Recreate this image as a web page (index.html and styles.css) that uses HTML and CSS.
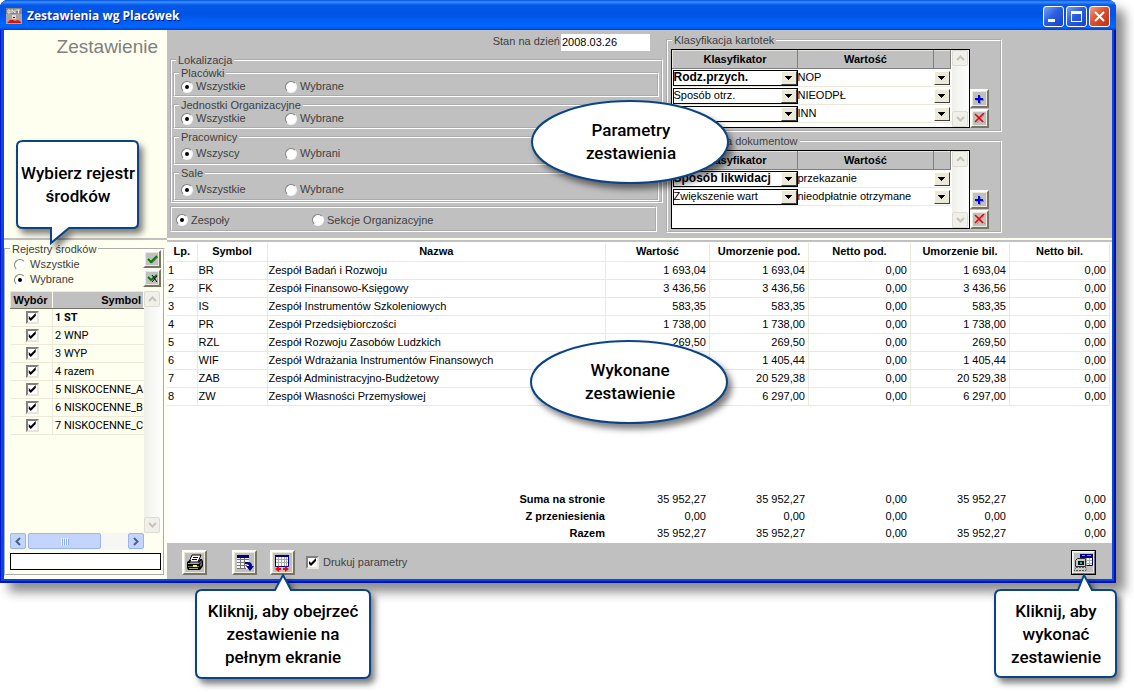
FILE: index.html
```html
<!DOCTYPE html>
<html lang="pl">
<head>
<meta charset="utf-8">
<title>Zestawienia wg Placówek</title>
<link rel="stylesheet" href="styles.css">
</head>
<body>
<svg class="defs" width="0" height="0" aria-hidden="true">
  <symbol id="chev-up" viewBox="0 0 9 6"><path d="M1 5 4.500 1.500 8 5" fill="none" stroke="currentColor" stroke-width="2"/></symbol>
  <symbol id="chev-down" viewBox="0 0 9 6"><path d="M1 1 4.500 4.500 8 1" fill="none" stroke="currentColor" stroke-width="2"/></symbol>
  <symbol id="chev-left" viewBox="0 0 6 9"><path d="M5 1 1.500 4.500 5 8" fill="none" stroke="currentColor" stroke-width="2"/></symbol>
  <symbol id="chev-right" viewBox="0 0 6 9"><path d="M1 1 4.500 4.500 1 8" fill="none" stroke="currentColor" stroke-width="2"/></symbol>
  <symbol id="drop" viewBox="0 0 7 4"><path d="M0 0h7v1h-1v1h-1v1h-1v1h-1v-1h-1v-1h-1v-1h-1z" fill="#000"/></symbol>
  <symbol id="plus" viewBox="0 0 11 11"><path d="M5 3h2v3h3v2h-3v3h-2v-3h-3v-2h3z" fill="#888"/><path d="M4 2h2v3h3v2h-3v3h-2v-3h-3v-2h3z" fill="#00f"/></symbol>
  <symbol id="cross" viewBox="0 0 11 11"><path d="M3 2 11 10M10 2 3 10" stroke="#999" stroke-width="1"/><path d="M1 1 4 4 9 9M10 0 5 5 1 9" stroke="#f00000" stroke-width="1.600" fill="none"/></symbol>
</svg>

<div class="stage">
<main class="window">
  <header class="titlebar">
    <svg class="app-icon" width="16" height="16" viewBox="0 0 16 16"><rect width="16" height="16" fill="#a9a3a3"/><path d="M0 0h16v6h-16z" fill="#8e8484"/><path d="M2 2h2v3h-2zM6 5v-3.500l3 3.500v-3.500M10 2h4M12.500 2v3.500" fill="none" stroke="#eee"/><path d="M6 7h4v4h-4z" fill="#ead8d0"/><path d="M7 9h2v1h-2z" fill="#222"/><path d="M1 15l3-3h3l2 1 3-1 3 2v1z" fill="#e01000"/></svg>
    <h1 class="title">Zestawienia wg Placówek</h1>
    <div class="winbtns">
      <button class="winbtn" aria-label="Minimalizuj"><svg width="19" height="19" viewBox="0 0 19 19"><path d="M4 12h7v3h-7z" fill="#fff"/></svg></button>
      <button class="winbtn" aria-label="Maksymalizuj"><svg width="19" height="19" viewBox="0 0 19 19"><path d="M4 4h11v11h-11zM5 7v7h9v-7z" fill="#fff" fill-rule="evenodd"/></svg></button>
      <button class="winbtn close" aria-label="Zamknij"><svg width="19" height="19" viewBox="0 0 19 19"><path d="M5 5 14 14M14 5 5 14" stroke="#fff" stroke-width="2"/></svg></button>
    </div>
  </header>

  <div class="client">
    <div class="side-top"><h2 class="heading">Zestawienie</h2></div>

    <section class="params">
      <div class="location">
        <div class="date-row"><label for="day">Stan na dzień</label><input id="day" class="date" type="text" value="2008.03.26"></div>
        <fieldset class="group outer">
          <legend>Lokalizacja</legend>
          <fieldset class="group inner short">
            <legend>Placówki</legend>
            <label class="opt"><input type="radio" name="pl" checked>Wszystkie</label><label class="opt"><input type="radio" name="pl">Wybrane</label>
          </fieldset>
          <fieldset class="group inner short">
            <legend>Jednostki Organizacyjne</legend>
            <label class="opt"><input type="radio" name="jo" checked>Wszystkie</label><label class="opt"><input type="radio" name="jo">Wybrane</label>
          </fieldset>
          <fieldset class="group inner tall">
            <legend>Pracownicy</legend>
            <label class="opt"><input type="radio" name="pr" checked>Wszyscy</label><label class="opt"><input type="radio" name="pr">Wybrani</label>
          </fieldset>
          <fieldset class="group inner tall">
            <legend>Sale</legend>
            <label class="opt"><input type="radio" name="sa" checked>Wszystkie</label><label class="opt"><input type="radio" name="sa">Wybrane</label>
          </fieldset>
        </fieldset>
        <div class="group units">
          <label class="opt unit"><input type="radio" name="zs" checked>Zespoły</label><label class="opt"><input type="radio" name="zs">Sekcje Organizacyjne</label>
        </div>
      </div>

      <div class="classes">
        <fieldset class="group class-set">
          <legend>Klasyfikacja kartotek</legend>
          <div class="class-body">
            <div class="class-box">
              <table class="class-table">
                <colgroup><col class="k1"><col><col class="k3"></colgroup>
                <thead><tr><th>Klasyfikator</th><th>Wartość</th><th></th></tr></thead>
                <tbody>
                  <tr><td><span class="combo framed"><select class="strong" aria-label="Klasyfikator 1"><option>Rodz.przych.</option></select><i><svg width="7" height="4"><use href="#drop"/></svg></i></span></td><td colspan="2"><span class="combo"><select aria-label="Wartość 1"><option>NOP</option></select><i><svg width="7" height="4"><use href="#drop"/></svg></i></span></td></tr>
                  <tr><td><span class="combo framed"><select aria-label="Klasyfikator 2"><option>Sposób otrz.</option></select><i><svg width="7" height="4"><use href="#drop"/></svg></i></span></td><td colspan="2"><span class="combo"><select aria-label="Wartość 2"><option>NIEODPŁ</option></select><i><svg width="7" height="4"><use href="#drop"/></svg></i></span></td></tr>
                  <tr><td><span class="combo framed"><select aria-label="Klasyfikator 3"><option></option></select><i><svg width="7" height="4"><use href="#drop"/></svg></i></span></td><td colspan="2"><span class="combo"><select aria-label="Wartość 3"><option>INN</option></select><i><svg width="7" height="4"><use href="#drop"/></svg></i></span></td></tr>
                </tbody>
              </table>
              <div class="vscroll"><span class="sb off"><svg width="9" height="6"><use href="#chev-up"/></svg></span><span class="sb off"><svg width="9" height="6"><use href="#chev-down"/></svg></span></div>
            </div>
            <div class="class-btns">
              <button class="bevel small" aria-label="Dodaj"><svg width="11" height="11"><use href="#plus"/></svg></button>
              <button class="bevel small" aria-label="Usuń"><svg width="11" height="11"><use href="#cross"/></svg></button>
            </div>
          </div>
        </fieldset>
        <fieldset class="group class-set">
          <legend>Klasyfikacja dokumentow</legend>
          <div class="class-body">
            <div class="class-box">
              <table class="class-table">
                <colgroup><col class="k1"><col><col class="k3"></colgroup>
                <thead><tr><th>Klasyfikator</th><th>Wartość</th><th></th></tr></thead>
                <tbody>
                  <tr><td><span class="combo framed"><select class="strong" aria-label="Klasyfikator 1"><option>Sposób likwidacj</option></select><i><svg width="7" height="4"><use href="#drop"/></svg></i></span></td><td colspan="2"><span class="combo"><select aria-label="Wartość 1"><option>przekazanie</option></select><i><svg width="7" height="4"><use href="#drop"/></svg></i></span></td></tr>
                  <tr><td><span class="combo framed"><select aria-label="Klasyfikator 2"><option>Zwiększenie wart</option></select><i><svg width="7" height="4"><use href="#drop"/></svg></i></span></td><td colspan="2"><span class="combo"><select aria-label="Wartość 2"><option>nieodpłatnie otrzymane</option></select><i><svg width="7" height="4"><use href="#drop"/></svg></i></span></td></tr>
                </tbody>
              </table>
              <div class="vscroll"><span class="sb off"><svg width="9" height="6"><use href="#chev-up"/></svg></span><span class="sb off"><svg width="9" height="6"><use href="#chev-down"/></svg></span></div>
            </div>
            <div class="class-btns">
              <button class="bevel small" aria-label="Dodaj"><svg width="11" height="11"><use href="#plus"/></svg></button>
              <button class="bevel small" aria-label="Usuń"><svg width="11" height="11"><use href="#cross"/></svg></button>
            </div>
          </div>
        </fieldset>
      </div>
    </section>

    <aside class="side">
      <fieldset class="group registers">
        <legend>Rejestry środków</legend>
        <div class="reg-head">
          <div class="reg-opts">
            <label class="opt"><input type="radio" name="rj">Wszystkie</label>
            <label class="opt"><input type="radio" name="rj" checked>Wybrane</label>
          </div>
          <div class="reg-btns">
            <button class="bevel reg" aria-label="Zaznacz wszystkie"><svg width="11" height="9" viewBox="0 0 11 9"><path d="M2 5 5 8 11 2" stroke="#777" fill="none"/><path d="M1 4 4 7 10 1" stroke="#008000" stroke-width="2" fill="none"/></svg></button>
            <button class="bevel reg" aria-label="Odznacz wszystkie"><svg width="11" height="9" viewBox="0 0 11 9"><path d="M1 3 4 6 10 1" stroke="#008000" stroke-width="2" fill="none"/><path d="M5 1 10 8M10 2 5 8" stroke="#000" fill="none"/></svg></button>
          </div>
        </div>
        <div class="reg-list">
          <table class="reg-table">
            <colgroup><col class="r1"><col></colgroup>
            <thead><tr><th>Wybór</th><th class="sym">Symbol</th></tr></thead>
            <tbody>
              <tr><td><input type="checkbox" checked id="r1"></td><td><label for="r1"><b>1 ST</b></label></td></tr>
              <tr><td><input type="checkbox" checked id="r2"></td><td><label for="r2">2 WNP</label></td></tr>
              <tr><td><input type="checkbox" checked id="r3"></td><td><label for="r3">3 WYP</label></td></tr>
              <tr><td><input type="checkbox" checked id="r4"></td><td><label for="r4">4 razem</label></td></tr>
              <tr><td><input type="checkbox" checked id="r5"></td><td><label for="r5">5 NISKOCENNE_A</label></td></tr>
              <tr><td><input type="checkbox" checked id="r6"></td><td><label for="r6">6 NISKOCENNE_B</label></td></tr>
              <tr><td><input type="checkbox" checked id="r7"></td><td><label for="r7">7 NISKOCENNE_C</label></td></tr>
            </tbody>
          </table>
          <div class="vscroll"><span class="sb off"><svg width="9" height="6"><use href="#chev-up"/></svg></span><span class="sb off"><svg width="9" height="6"><use href="#chev-down"/></svg></span></div>
        </div>
        <div class="hscroll"><span class="sb"><svg width="6" height="9"><use href="#chev-left"/></svg></span><span class="thumb"><svg width="8" height="7" viewBox="0 0 8 7"><path d="M0 0h1v7h-1zM2 0h1v7h-1zM4 0h1v7h-1zM6 0h1v7h-1z" fill="#eef4fe"/><path d="M1 1h1v6h-1zM3 1h1v6h-1zM5 1h1v6h-1zM7 1h1v6h-1z" fill="#8cb0f8"/></svg></span><span class="sb end"><svg width="6" height="9"><use href="#chev-right"/></svg></span></div>
        <input class="search" type="text" aria-label="Szukaj">
      </fieldset>
    </aside>

    <section class="report">
      <table class="data">
        <colgroup><col class="c1"><col class="c2"><col><col class="c4"><col class="c5"><col class="c6"><col class="c5"><col class="c8"></colgroup>
        <thead><tr><th>Lp.</th><th>Symbol</th><th>Nazwa</th><th>Wartość</th><th>Umorzenie pod.</th><th>Netto pod.</th><th>Umorzenie bil.</th><th>Netto bil.</th></tr></thead>
        <tbody>
          <tr><td>1</td><td>BR</td><td>Zespół Badań i Rozwoju</td><td>1 693,04</td><td>1 693,04</td><td>0,00</td><td>1 693,04</td><td>0,00</td></tr>
          <tr><td>2</td><td>FK</td><td>Zespół Finansowo-Księgowy</td><td>3 436,56</td><td>3 436,56</td><td>0,00</td><td>3 436,56</td><td>0,00</td></tr>
          <tr><td>3</td><td>IS</td><td>Zespół Instrumentów Szkoleniowych</td><td>583,35</td><td>583,35</td><td>0,00</td><td>583,35</td><td>0,00</td></tr>
          <tr><td>4</td><td>PR</td><td>Zespół Przedsiębiorczości</td><td>1 738,00</td><td>1 738,00</td><td>0,00</td><td>1 738,00</td><td>0,00</td></tr>
          <tr><td>5</td><td>RZL</td><td>Zespół Rozwoju Zasobów Ludzkich</td><td>269,50</td><td>269,50</td><td>0,00</td><td>269,50</td><td>0,00</td></tr>
          <tr><td>6</td><td>WIF</td><td>Zespół Wdrażania Instrumentów Finansowych</td><td></td><td>1 405,44</td><td>0,00</td><td>1 405,44</td><td>0,00</td></tr>
          <tr><td>7</td><td>ZAB</td><td>Zespół Administracyjno-Budżetowy</td><td></td><td>20 529,38</td><td>0,00</td><td>20 529,38</td><td>0,00</td></tr>
          <tr><td>8</td><td>ZW</td><td>Zespół Własności Przemysłowej</td><td></td><td>6 297,00</td><td>0,00</td><td>6 297,00</td><td>0,00</td></tr>
        </tbody>
      </table>
      <table class="totals">
        <colgroup><col><col class="c4"><col class="c5"><col class="c6"><col class="c5"><col class="c8"></colgroup>
        <tbody>
          <tr><th scope="row">Suma na stronie</th><td>35 952,27</td><td>35 952,27</td><td>0,00</td><td>35 952,27</td><td>0,00</td></tr>
          <tr><th scope="row">Z przeniesienia</th><td>0,00</td><td>0,00</td><td>0,00</td><td>0,00</td><td>0,00</td></tr>
          <tr><th scope="row">Razem</th><td>35 952,27</td><td>35 952,27</td><td>0,00</td><td>35 952,27</td><td>0,00</td></tr>
        </tbody>
      </table>
      <footer class="toolbar">
        <button class="bevel tool print" aria-label="Drukuj"><svg width="18" height="17" viewBox="0 0 18 17"><path d="M6 1h9l-3 7h-9z" fill="#fff" stroke="#000"/><path d="M7 3.500h5M6 5.500h5" stroke="#000"/><path d="M1 8 4 6h1l-1 3h8l2-4h2l1 2v5l-3 4h-12l-1-2z" fill="#000"/><path d="M2 9.500h11l3-3" stroke="#a8a8a8" fill="none"/><path d="M2 12h11v1h-11z" fill="#808000"/><path d="M7 11h4v2h-4z" fill="#ff0"/><path d="M3 14.500h9" stroke="#a0a0a0"/><path d="M14 10v3l2-2v-3z" fill="#666"/></svg></button>
        <button class="bevel tool export" aria-label="Eksportuj"><svg width="18" height="18" viewBox="0 0 18 18"><path d="M1 4h12v11h-12z" fill="#f4f4f4"/><path d="M1 1h12v3h-12z" fill="#00008b"/><path d="M1 5.500h12M1 8.500h10M1 11.500h10M1 14.500h9M4.500 4v11M8.500 4v11" stroke="#777" shape-rendering="crispEdges"/><path d="M9 8h3q4 0 4 4h2l-4 5-4-5h3q0-2-4-2z" fill="#00008b"/></svg></button>
        <button class="bevel tool" aria-label="Pełny ekran"><svg width="17" height="18" viewBox="0 0 17 18"><path d="M1 1h14v11h-14z" fill="#fff"/><path d="M2 5.500h12M2 8.500h12M4.500 3v9M7.500 3v9M10.500 3v9M12.500 3v9" stroke="#aaa" shape-rendering="crispEdges"/><path d="M1.500 1.500h13v11h-13z" fill="none" stroke="#00008b"/><path d="M1 1h14v2h-14z" fill="#00008b"/><path d="M1 15l4-3v2h2v2h-2v2zM15 15l-4-3v2h-2v2h2v2z" fill="#f00"/></svg></button>
        <label class="print-params"><input type="checkbox" checked>Drukuj parametry</label>
        <button class="bevel tool run" aria-label="Wykonaj zestawienie"><svg width="20" height="19" viewBox="0 0 20 19"><path d="M7 1h12v12h-12z" fill="#fff"/><path d="M6 1h13v4h-13z" fill="#00008b"/><path d="M8 2.500h3M13 2.500h4" stroke="#8890d0"/><path d="M10 7.500h9M10 10.500h9M15.500 5v8M12.500 5v8" stroke="#aaa"/><path d="M18.500 5v7.500h-6" stroke="#00008b" fill="none"/><path d="M1.500 7.500 3.500 5.500h8v8h-10z" fill="#c8c8c8" stroke="#333"/><path d="M4 8h6v4h-6z" fill="#111"/><path d="M6 9h2v2h-2z" fill="#00c8b0"/><path d="M2 14.500h10v3h-12z" fill="#ccc" stroke="#555" stroke-dasharray="2 1"/></svg></button>
      </footer>
    </section>
  </div>
</main>

<div class="callout pick"><svg class="shape" width="124" height="106" viewBox="0 0 124 106"><path d="M7 1H117Q122 1 122 6V83Q122 88 117 88H53L35 103V88H7Q1 88 1 83V6Q1 1 7 1Z"/></svg><p>Wybierz rejestr<br>środków</p></div>
<div class="callout oval params-note"><svg class="shape" width="200" height="84" viewBox="0 0 200 84"><ellipse cx="99" cy="42" rx="98" ry="41"/></svg><p>Parametry<br>zestawienia</p></div>
<div class="callout oval result-note"><svg class="shape" width="200" height="84" viewBox="0 0 200 84"><ellipse cx="99" cy="42" rx="98" ry="41"/></svg><p>Wykonane<br>zestawienie</p></div>
<div class="callout full"><svg class="shape" width="176" height="106" viewBox="0 0 176 106"><path d="M7 16H80L88 1L96 16H169Q175 16 175 22V98Q175 104 169 104H7Q1 104 1 98V22Q1 16 7 16Z"/></svg><p>Kliknij, aby obejrzeć<br>zestawienie na<br>pełnym ekranie</p></div>
<div class="callout exec"><svg class="shape" width="124" height="106" viewBox="0 0 124 106"><path d="M7 16H84L90 1L98 16H116Q122 16 122 22V97Q122 103 116 103H7Q1 103 1 97V22Q1 16 7 16Z"/></svg><p>Kliknij, aby<br>wykonać<br>zestawienie</p></div>
</div>
</body>
</html>
```
FILE: styles.css
```css
* { box-sizing: border-box; }

body {
  margin: 0;
  background: #fff;
  color: #000;
  font: 11px/13px "Liberation Sans", Arial, sans-serif;
}

.defs { position: absolute; }
svg { display: block; overflow: visible; }
button, input, select { font: inherit; color: inherit; margin: 0; padding: 0; border-radius: 0; }

.stage { position: relative; padding: 0 18px 109px 0; }

/* Window frame */
.window {
  display: flex;
  flex-direction: column;
  min-height: calc(100vh - 109px);
  padding: 0 4px 4px;
  border-radius: 8px 8px 0 0;
  background: #0a46e4;
  box-shadow: inset 1px 0 #0019cf, inset -2px -2px #0014a8, 9px 9px 11px rgba(0, 0, 0, .45);
}
.titlebar {
  display: flex;
  align-items: center;
  height: 30px;
  margin: 0 -4px;
  padding: 2px 6px 0;
  border-radius: 8px 8px 0 0;
  background: linear-gradient(#0050d8 0, #3a90ff 2px, #0458e8 5px, #0054e3 14px, #0060fa 22px, #0066ff 27px, #0040c8 30px);
}
.title {
  flex: 1;
  margin: 0 0 0 5px;
  color: #fff;
  font: bold 12px/18px "Open Sans", "Noto Sans", sans-serif;
  text-shadow: 1px 1px #0a1883;
}
.winbtns { display: flex; gap: 2px; }
.winbtn {
  width: 21px;
  height: 21px;
  border: 1px solid #fff;
  border-radius: 3px;
  background: linear-gradient(135deg, #7ba2f0, #2b5fe0 45%, #1941c8);
}
.winbtn.close { background: linear-gradient(135deg, #f0a084, #e0502c 45%, #c03010); }

.client {
  flex: 1;
  display: grid;
  grid-template-columns: 163px minmax(0, 1fr);
  grid-template-rows: auto 1fr;
  background: #fffff0;
}
.side-top { border-bottom: 2px solid #c0c0c0; }
.heading {
  margin: 6px 9px 0 0;
  color: #808080;
  font: 19px/22px "Liberation Sans", Arial, sans-serif;
  text-align: right;
}

/* Grouping boxes */
.group { min-width: 0; margin: 0; padding: 0; border: 2px groove #fff; color: #404040; }
.group legend { margin-left: 3px; padding: 0 2px; line-height: 12px; }
.opt { display: flex; align-items: center; gap: 3px; }
input[type="radio"] {
  appearance: none;
  display: grid;
  place-content: center;
  width: 12px;
  height: 12px;
  border: 1px solid;
  border-color: #808080 #f4f4f4 #f4f4f4 #808080;
  border-radius: 50%;
  background: #fff;
}
input[type="radio"]:checked::before {
  content: "";
  width: 4px;
  height: 4px;
  border-radius: 50%;
  background: #000;
}
input[type="checkbox"] {
  appearance: none;
  display: block;
  width: 13px;
  height: 13px;
  border: 2px solid;
  border-color: #808080 #e8e6dc #e8e6dc #808080;
  background: #fff;
}
input[type="checkbox"]:checked::before {
  content: "";
  display: block;
  width: 9px;
  height: 9px;
  background: #000;
  clip-path: polygon(1px 3px, 3px 5px, 8px 0, 8px 3px, 3px 8px, 1px 6px);
}

/* Parameters */
.params {
  display: flex;
  gap: 3px;
  padding: 4px 0 5px 3px;
  background: #c0c0c0;
  border-bottom: 2px solid #fffff0;
}
.location { flex: 0 1 493px; display: flex; flex-direction: column; }
.date-row {
  display: flex;
  justify-content: flex-end;
  gap: 1px;
  margin: 0 13px 3px 0;
  color: #404040;
  line-height: 15px;
}
.date { width: 89px; height: 17px; padding: 0 0 2px 1px; border: 0; background: #fff; color: #000; }
.outer { padding: 1px 2px 0 1px; }
.inner { display: grid; grid-template-columns: 104px 1fr; align-items: start; margin-bottom: 2px; padding-left: 6px; }
.inner legend { margin-left: -2px; }
.inner:last-child { margin-bottom: 0; }
.short { height: 30px; padding-top: 1px; }
.tall { height: 34px; padding-top: 4px; }
.units { display: grid; grid-template-columns: 136px 1fr; align-items: center; margin: 3px 6px 0 0; padding: 2px 0 0 4px; height: 26px; }

.classes { flex: 0 1 336px; display: flex; flex-direction: column; gap: 3px; }
.classes legend { margin-left: 1px; }
.class-set { height: 98px; padding: 3px 0 0 3px; }
.class-body { display: flex; }
.class-box { flex: 0 1 299px; display: flex; justify-content: space-between; height: 79px; border: 1px solid #000; background: #fff; color: #000; }
.class-table { width: 279px; border-collapse: collapse; table-layout: fixed; }
.k1 { width: 125px; }
.k3 { width: 17px; }
.class-table th {
  height: 18px;
  padding: 0;
  border: 1px solid;
  border-color: #e8e6dc #808080 #808080 #e8e6dc;
  background: #c0c0c0;
}
.class-table { align-self: flex-start; }
.class-table td { height: 18px; padding: 0; }
.combo { display: grid; align-items: center; height: 18px; border-bottom: 1px solid #ece9d8; }
.combo > * { grid-area: 1 / 1; }
.combo select { appearance: none; width: 100%; height: 16px; border: 0; background: #fff; }
.combo .strong { font-size: 12px; font-weight: bold; }
.combo.framed select { border: 1px solid #000; }
.combo i {
  display: grid;
  place-content: center;
  justify-self: end;
  width: 16px;
  height: 14px;
  margin-right: 1px;
  border: 1px solid;
  border-color: #fffff0 #404040 #404040 #fffff0;
  background: #ece9d8;
  pointer-events: none;
}
.class-btns { display: flex; flex-direction: column; justify-content: flex-end; gap: 1px; }

/* Raised buttons */
.bevel {
  display: grid;
  place-content: center;
  border: 2px solid;
  border-color: #fff #77746a #77746a #fff;
  background: #c0c0c0;
  box-shadow: inset 0 0 0 1px #ece9d8;
}
.small { width: 19px; height: 19px; }
.reg { width: 18px; height: 18px; }
.tool { width: 25px; height: 25px; }

/* Scrollbars */
.vscroll { display: flex; flex-direction: column; justify-content: space-between; width: 17px; background: linear-gradient(90deg, #f0f0ea, #fefefe); }
.sb {
  display: grid;
  place-content: center;
  width: 16px;
  height: 16px;
  border: 1px solid #9ab4ee;
  border-radius: 2px;
  background: #c3d5fd;
  color: #4d6185;
}
.sb.off { border-color: #dddcd0; background: #f0f0e8; color: #c4c4bc; }
.hscroll { display: flex; gap: 2px; width: 134px; height: 17px; background: #f6f6f2; }
.thumb { display: grid; place-content: center; width: 73px; height: 16px; border: 1px solid #9ab4ee; border-radius: 2px; background: #c3d5fd; }
.end { margin-left: auto; }

/* Registers */
.side { display: flex; padding: 3px 2px 3px 0; min-width: 0; }
.registers { flex: 1; display: flex; flex-direction: column; padding: 0 2px 4px 4px; }
.registers legend { margin-left: 0; }
.reg-head { display: flex; justify-content: space-between; height: 36px; }
.reg-opts { display: flex; flex-direction: column; padding: 2px 0 0 4px; }
.reg-opts .opt { height: 15px; gap: 4px; }
.reg-btns { margin-top: -5px; display: flex; flex-direction: column; gap: 1px; }
.reg-list { flex: 1; display: flex; justify-content: space-between; color: #000; }
.reg-table { align-self: flex-start; width: 134px; border-collapse: collapse; table-layout: fixed; }
.r1 { width: 42px; }
.reg-table th { height: 17px; padding: 0 2px 0 0; border: 1px solid; border-color: #ece9d8 #fffff0 #77746a #ece9d8; background: #c0c0c0; }
.reg-table .sym { text-align: right; }
.reg-table td { height: 18px; padding: 0 0 0 2px; border-bottom: 1px solid #ece9d8; border-right: 1px solid #ece9d8; white-space: nowrap; }
.reg-table td:last-child { border-right: 0; }
.reg-table label { font-family: Roboto, "Liberation Sans", sans-serif; }
.reg-table input { margin: 0 auto; }
.search { width: 151px; height: 17px; margin-top: 3px; border: 1px solid #000; background: #fff; }

/* Report */
.report { display: flex; flex-direction: column; min-width: 0; padding-top: 1px; border-top: 2px solid #c0c0c0; background: #fff; }
.data, .totals { width: calc(100% - 2px); border-collapse: collapse; table-layout: fixed; }
.c1 { width: 30px; }
.c2 { width: 70px; }
.c4 { width: 104px; }
.c5 { width: 99px; }
.c6 { width: 102px; }
.c8 { width: 100px; }
.data th, .data td { height: 18px; padding: 0 3px 0 1px; border-right: 1px solid #ece9d8; border-bottom: 1px solid #ece9d8; white-space: nowrap; }
.data th { padding: 0; }
.data td { text-align: left; }
.data td:nth-child(n+4), .totals td { text-align: right; }
.totals { margin-top: auto; }
.totals th { height: 17px; padding: 0 1px 0 0; text-align: right; }
.totals td { padding: 0 4px 0 0; }

.toolbar { display: flex; align-items: center; height: 36px; margin-top: 1px; padding: 3px 16px 0 15px; background: #c0c0c0; color: #404040; }
.print { margin-right: 25px; }
.export { margin-right: 13px; }
.print-params { display: flex; align-items: center; gap: 4px; margin-left: 11px; }
.run { margin-left: auto; outline: 1px solid #000; outline-offset: -1px; }

/* Notes over the window */
.callout {
  position: absolute;
  display: grid;
  font: 500 17px/23px Roboto, "Liberation Sans", sans-serif;
  text-align: center;
  white-space: nowrap;
}
.callout > * { grid-area: 1 / 1; }
.callout p { z-index: 1; margin: 0; color: #000; }
.shape { fill: #fff; stroke: #0a4486; stroke-width: 2; filter: drop-shadow(4px 5px 3px rgba(0, 0, 0, .5)); }
.pick { left: 16px; top: 140px; }
.pick p { padding-top: 22px; }
.oval p { padding-top: 19px; }
.params-note { left: 531px; top: 100px; }
.result-note { left: 530px; top: 340px; }
.full { left: 195px; top: 574px; }
.full p, .exec p { padding-top: 26px; }
.exec { right: 16px; top: 574px; }
```
